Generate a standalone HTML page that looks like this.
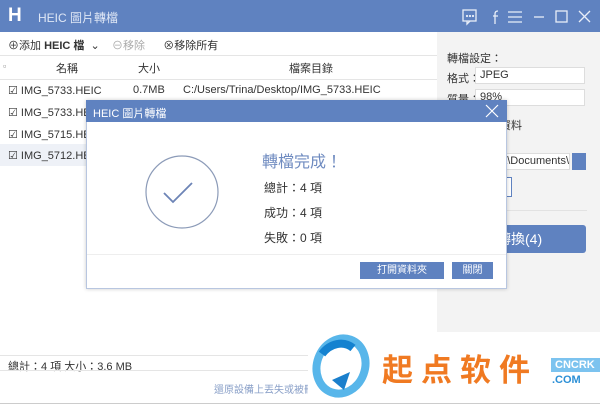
<html><head><style>
body{margin:0;width:600px;height:405px;overflow:hidden;background:#fff;font-family:"Liberation Sans","Noto Sans CJK TC",sans-serif;font-size:11px;color:#333;position:relative}
.a{position:absolute}
</style></head><body>
<div class="a" style="left:0;top:0;width:600px;height:32px;background:#5f82c0"></div>
<div class="a" style="left:8px;top:7px;width:18px;height:18px;color:#fff;font-weight:bold;font-size:19px;line-height:18px">H</div>
<div class="a" style="left:38px;top:9px;color:#dfe7f5;font-size:12px">HEIC 圖片轉檔</div>
<svg class="a" style="left:460px;top:8px" width="135" height="18" fill="none" stroke="#e8eef8" stroke-width="1.3">
<rect x="3" y="2" width="13" height="11"/><path d="M7 13 L7 16 L10 13"/><circle cx="7" cy="8" r=".5"/><circle cx="10" cy="8" r=".5"/><circle cx="13" cy="8" r=".5"/>
<path d="M35 16V6Q35 3 38 3M33 8H38"/><path d="M48 4H62M48 9H62M48 14H62"/><path d="M74 9H84"/><rect x="96" y="3" width="11" height="11"/><path d="M119 3L130 14M130 3L119 14"/></svg>
<div class="a" style="left:437px;top:32px;width:163px;height:300px;background:#f3f3f3"></div>
<div class="a" style="left:8px;top:37px">⊕添加 <b>HEIC 檔</b> &nbsp;⌄ &nbsp;&nbsp;&nbsp;<span style="color:#aaa">⊖移除</span> &nbsp;&nbsp;&nbsp;&nbsp;&nbsp;⊗移除所有</div>
<div class="a" style="left:0;top:55px;width:437px;height:23px;border-top:1px solid #e5e5e5;border-bottom:1px solid #e5e5e5"></div>
<div class="a" style="left:3px;top:61px;color:#888;font-size:9px">▫</div>
<div class="a" style="left:56px;top:60px">名稱</div>
<div class="a" style="left:138px;top:60px">大小</div>
<div class="a" style="left:289px;top:60px">檔案目錄</div>
<div class="a" style="left:8px;top:84px">☑ IMG_5733.HEIC</div><div class="a" style="left:133px;top:84px">0.7MB</div><div class="a" style="left:183px;top:84px">C:/Users/Trina/Desktop/IMG_5733.HEIC</div>
<div class="a" style="left:8px;top:106px">☑ IMG_5733.HEIC</div>
<div class="a" style="left:8px;top:128px">☑ IMG_5715.HEIC</div>
<div class="a" style="left:0;top:144px;width:437px;height:22px;background:#eef1f7"></div>
<div class="a" style="left:8px;top:149px">☑ IMG_5712.HEIC</div>
<div class="a" style="left:447px;top:50px;font-size:11px">轉檔設定：</div>
<div class="a" style="left:447px;top:70px">格式：</div><div class="a" style="left:475px;top:67px;width:110px;height:17px;box-sizing:border-box;background:#fff;border:1px solid #ddd;padding-left:4px;line-height:15px">JPEG</div>
<div class="a" style="left:447px;top:91px">質量：</div><div class="a" style="left:475px;top:89px;width:110px;height:17px;box-sizing:border-box;background:#fff;border:1px solid #ddd;padding-left:4px;line-height:15px">98%</div>
<div class="a" style="left:500px;top:117px">資料</div>
<div class="a" style="left:475px;top:153px;width:95px;height:17px;box-sizing:border-box;background:#fff;border:1px solid #ddd;text-align:right;line-height:15px">na\Documents\</div>
<div class="a" style="left:572px;top:153px;width:14px;height:17px;background:#5f82c0"></div>
<div class="a" style="left:490px;top:177px;width:20px;height:18px;background:#fff;border:1px solid #5f82c0"></div>
<div class="a" style="left:437px;top:210px;width:150px;border-top:1px solid #e2e2e2"></div>
<div class="a" style="left:437px;top:225px;width:149px;height:28px;background:#5f82c0;border-radius:3px;color:#fff;font-size:14px;line-height:28px;padding-left:60px;box-sizing:border-box">轉換(4)</div>
<div class="a" style="left:0;top:355px;width:600px;border-top:1px solid #e5e5e5"></div>
<div class="a" style="left:8px;top:358px">總計：4 項 大小：3.6 MB</div>
<div class="a" style="left:0;top:370px;width:600px;border-top:1px solid #e5e5e5"></div>
<div class="a" style="left:214px;top:381px;color:#8aa0c8;font-size:10px">還原設備上丟失或被刪</div>
<div class="a" style="left:0;top:403px;width:600px;border-top:1px solid #ccc"></div>
<div class="a" style="left:86px;top:100px;width:419px;height:187px;background:#fff;border:1px solid #b8c6e0;box-shadow:0 0 4px rgba(0,0,0,.2)"></div>
<div class="a" style="left:86px;top:100px;width:421px;height:22px;background:#5f82c0"></div>
<div class="a" style="left:93px;top:105px;color:#fff;font-size:11px">HEIC 圖片轉檔</div>
<svg class="a" style="left:485px;top:104px" width="14" height="14" stroke="#fff" stroke-width="1.2"><path d="M1 1L13 13M13 1L1 13"/></svg>
<svg class="a" style="left:140px;top:150px" width="84" height="84" fill="none" stroke="#8c9bb8" stroke-width="1.2"><circle cx="42" cy="42" r="36"/><path d="M24 43L33 52L52 33" stroke="#6d84b6" stroke-width="1.8"/></svg>
<div class="a" style="left:262px;top:148px;color:#6f8bc0;font-size:16px">轉檔完成！</div>
<div class="a" style="left:264px;top:179px;font-size:12px">總計：4 項</div>
<div class="a" style="left:264px;top:204px;font-size:12px">成功：4 項</div>
<div class="a" style="left:264px;top:229px;font-size:12px">失敗：0 項</div>
<div class="a" style="left:87px;top:254px;width:419px;border-top:1px solid #eee"></div>
<div class="a" style="left:360px;top:262px;width:84px;height:17px;background:#5f82c0;color:#fff;text-align:center;line-height:17px;font-size:10px">打開資料夾</div>
<div class="a" style="left:452px;top:262px;width:41px;height:17px;background:#5f82c0;color:#fff;text-align:center;line-height:17px;font-size:10px">關閉</div>
<div class="a" style="left:308px;top:332px;width:292px;height:70px;background:#fff"></div>
<svg class="a" style="left:308px;top:332px" width="64" height="68"><ellipse cx="33" cy="34" rx="24" ry="28" fill="none" stroke="#58b6ea" stroke-width="8" transform="rotate(20 33 34)"/><path d="M14 22A22 26 20 0 1 45 16" fill="none" stroke="#1482d0" stroke-width="8"/><path d="M24 48L36 58L42 40Z" fill="#1a7fcc"/></svg>
<div class="a" style="left:382px;top:354px;color:#f07a22;font-size:31px;font-weight:bold;letter-spacing:8px;line-height:34px">起点软件</div>
<div class="a" style="left:551px;top:358px;width:49px;height:14px;background:#7cc3ef;color:#fff;font-size:11px;font-weight:bold;line-height:14px;padding-left:4px;box-sizing:border-box">CNCRK</div>
<div class="a" style="left:552px;top:374px;color:#2b8fd6;font-size:11px;font-weight:bold">.COM</div>
</body></html>
